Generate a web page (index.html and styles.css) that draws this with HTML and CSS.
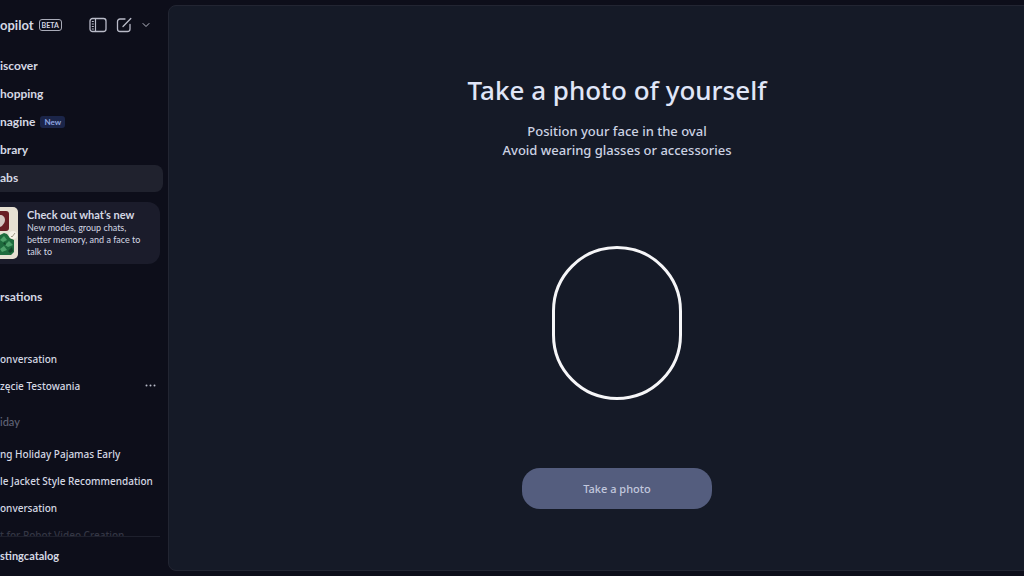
FILE: index.html
```html
<!DOCTYPE html>
<html lang="en">
<head>
    <meta charset="UTF-8">
    <meta name="viewport" content="width=device-width, initial-scale=1.0">
    <title>Copilot Labs</title>
    <link rel="stylesheet" href="styles.css">
</head>
<body>
    <aside class="sidebar">
        <header class="brand">
            <span class="brand-name">opilot</span>
            <span class="beta">BETA</span>
            <div class="brand-tools">
                <button class="icon-btn" aria-label="Toggle sidebar">
                    <svg width="18" height="16" viewBox="0 0 18 16" fill="none" stroke="currentColor">
                        <rect x="1" y="1.500" width="16" height="13" rx="2.500" stroke-width="1.300"/>
                        <path d="M6.500 1.500v13" stroke-width="1.200"/>
                        <path d="M2.800 4.500h2M2.800 7h2M2.800 9.500h2M2.800 12h2"/>
                    </svg>
                </button>
                <button class="icon-btn" aria-label="New chat">
                    <svg width="16" height="16" viewBox="0 0 16 16" fill="none" stroke="currentColor" stroke-width="1.300" stroke-linecap="round">
                        <path d="M9 2H4a2.500 2.500 0 0 0-2.500 2.500v7.500A2.500 2.500 0 0 0 4 14.500h7.500A2.500 2.500 0 0 0 14 12V7.500"/>
                        <path d="M7 9.500 14.800 1.500"/>
                    </svg>
                </button>
                <button class="icon-btn" aria-label="More chat options">
                    <svg width="10" height="10" viewBox="0 0 10 10" fill="none" stroke="currentColor" stroke-linecap="round" stroke-linejoin="round">
                        <path d="M2 3.500 5 6.500 8 3.500"/>
                    </svg>
                </button>
            </div>
        </header>

        <nav class="menu">
            <a href="#">iscover</a>
            <a href="#">hopping</a>
            <a href="#">nagine <span class="new">New</span></a>
            <a href="#">brary</a>
            <a href="#" class="active">abs</a>
        </nav>

        <a href="#" class="news">
            <svg class="news-art" width="18" height="52" viewBox="0 0 18 52">
                <path d="M0 0h13a5 5 0 0 1 5 5v42a5 5 0 0 1-5 5H0z" fill="#e6e0d2"/>
                <path d="M0 4h6a3 3 0 0 1 3 3v14a3 3 0 0 1-3 3H0z" fill="#681d24"/>
                <path d="M0 8c3 0 5 2 5 5s-2 4-3 6l-2 1z" fill="#d3c5c0"/>
                <path d="M0 28l4-2 3 1 3 4 4 2v12l-3 3H0z" fill="#1e6b3d"/>
                <path d="M0 33l4-4 3 4-4 2zM5 38l4-4 4 4-5 2zM0 42l4-3 3 4-5 2z" fill="#4fa26b"/>
                <path d="M3 37l2-2 1 3zM8 44l4-4 1 4-3 2z" fill="#124529"/>
                <circle cx="13" cy="28" r="4" fill="#f5f1e7"/>
                <path d="M11 29l1 1 3-4" fill="none" stroke="#a29b88"/>
            </svg>
            <span class="news-text">
                <strong>Check out what’s new</strong>
                <span>New modes, group chats, better memory, and a face to talk to</span>
            </span>
        </a>

        <section class="history">
            <h2>rsations</h2>
            <ul>
                <li><a href="#">onversation</a></li>
                <li>
                    <a href="#">zęcie Testowania</a>
                    <button class="icon-btn" aria-label="Conversation options">
                        <svg width="11" height="3" viewBox="0 0 11 3" fill="currentColor">
                            <circle cx="1.500" cy="1.500" r="1"/>
                            <circle cx="5.500" cy="1.500" r="1"/>
                            <circle cx="9.500" cy="1.500" r="1"/>
                        </svg>
                    </button>
                </li>
            </ul>
            <h3>iday</h3>
            <ul>
                <li><a href="#">ng Holiday Pajamas Early</a></li>
                <li><a href="#">le Jacket Style Recommendation</a></li>
                <li><a href="#">onversation</a></li>
                <li class="faded"><a href="#">t for Robot Video Creation</a></li>
            </ul>
        </section>

        <footer class="account"><a href="#">stingcatalog</a></footer>
    </aside>

    <main class="panel">
        <h1>Take a photo of yourself</h1>
        <p>Position your face in the oval<br>Avoid wearing glasses or accessories</p>
        <div class="oval"></div>
        <button class="photo-btn">Take a photo</button>
    </main>
</body>
</html>
```
FILE: styles.css
```css
* {
    box-sizing: border-box;
}
body {
    display: flex;
    height: 100vh;
    margin: 0;
    padding: 5px 0;
    overflow: hidden;
    background-color: #0d0e1a;
    color: #d5d8e4;
    font-family: "Noto Sans", sans-serif;
    font-size: 11px;
}
a {
    color: inherit;
    text-decoration: none;
}
button {
    font-family: inherit;
    cursor: pointer;
}
ul {
    margin: 0;
    padding: 0;
    list-style: none;
}
.sidebar {
    display: flex;
    flex-direction: column;
    flex: none;
    width: 168px;
    overflow: hidden;
    font-family: Lato, "Noto Sans", sans-serif;
}
.brand {
    display: flex;
    align-items: center;
    gap: 5px;
    height: 40px;
    margin-bottom: 2px;
    padding-right: 17px;
}
.brand-name {
    font-size: 13px;
    font-weight: 700;
}
.beta {
    padding: 0 2px;
    border: 1px solid #a9abb8;
    border-radius: 3px;
    font-size: 7px;
    font-weight: 700;
    line-height: 10px;
}
.brand-tools {
    display: flex;
    align-items: center;
    gap: 9px;
    margin-left: auto;
}
.icon-btn {
    display: flex;
    padding: 0;
    border: 0;
    background: none;
    color: #b9bbc8;
}
.menu {
    margin-right: 5px;
    padding-top: 6px;
    font-size: 12px;
    font-weight: 700;
}
.menu a {
    display: flex;
    align-items: center;
    gap: 5px;
    height: 27px;
    margin-bottom: 1px;
    padding-bottom: 2px;
}
.menu .active {
    border-radius: 0 8px 8px 0;
    background-color: #20222e;
}
.new {
    padding: 0 4px;
    border-radius: 3px;
    background-color: #1b2549;
    color: #8fa5e0;
    font-size: 8px;
    line-height: 12px;
}
.news {
    display: flex;
    flex: none;
    align-items: center;
    gap: 9px;
    margin: 9px 8px 0 0;
    padding: 5px 8px 5px 0;
    border-radius: 0 12px 12px 0;
    background-color: #1b1c2b;
    font-size: 9px;
    line-height: 12px;
}
.news-art {
    flex: none;
}
.news-text strong {
    display: block;
    font-size: 11px;
    line-height: 14px;
}
.history {
    flex: 1;
    min-height: 0;
    margin-right: 8px;
    overflow: hidden;
    border-bottom: 1px solid #1e202d;
}
.history h2 {
    margin: 23px 0 38px;
    font-size: 12px;
    font-weight: 700;
    line-height: 20px;
}
.history h3 {
    margin: 13px 0 8px;
    color: #606376;
    font-size: 11px;
    font-weight: 500;
    line-height: 20px;
}
.history li {
    display: flex;
    align-items: center;
    justify-content: space-between;
    height: 27px;
    padding-right: 4px;
    font-family: "Noto Sans", sans-serif;
    font-size: 10px;
    font-weight: 500;
    white-space: nowrap;
}
.history .faded {
    color: #343644;
}
.account {
    padding: 8px 0 5px;
    font-weight: 700;
    line-height: 21px;
}
/* the panel runs past the right edge of the window */
.panel {
    display: flex;
    flex: 1;
    flex-direction: column;
    align-items: center;
    margin-right: -42px;
    padding: 64px 0;
    border: 1px solid #222532;
    border-radius: 8px;
    background-color: #151a27;
}
.panel h1 {
    margin: 0;
    color: #e0e6f8;
    font-size: 26px;
    font-weight: 500;
    line-height: 40px;
}
.panel p {
    margin: 12px 0 0;
    color: #ccd2e3;
    font-size: 13px;
    font-weight: 500;
    line-height: 19px;
    text-align: center;
}
.oval {
    flex: none;
    width: 130px;
    height: 154px;
    margin: 86px 0 68px;
    border: 3px solid #f6f6f8;
    border-radius: 65px;
}
.photo-btn {
    padding: 0 61px;
    border: 0;
    border-radius: 18px;
    background-color: #545d7e;
    color: #c2c8dd;
    font-size: 11px;
    font-weight: 500;
    line-height: 41px;
}
```
